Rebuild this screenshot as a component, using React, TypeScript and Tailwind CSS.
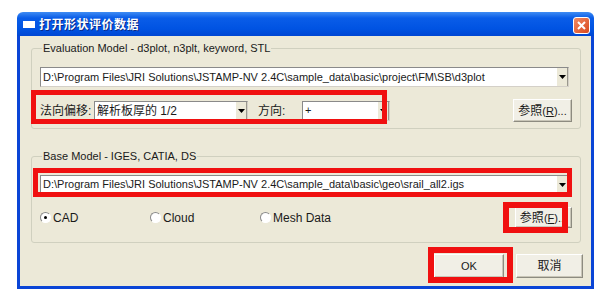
import React from "react";

const latin = { fontFamily: '"Liberation Sans", Arial, sans-serif' };
const cjk = { fontFamily: '"Liberation Sans", "Noto Sans CJK SC", sans-serif' };

function Arrow() {
  return (
    <svg width="7" height="4" viewBox="0 0 7 4">
      <path d="M0 0 H7 L3.5 4 Z" fill="#000" />
    </svg>
  );
}

function Combo({ text, w, h = 20, cjkText = false }: { text: string; w: number; h?: number; cjkText?: boolean }) {
  return (
    <div
      className="flex items-stretch bg-white border border-[#8a8a8a] border-r-[#d4d0c8] border-b-[#d4d0c8] shrink-0"
      style={{ width: w, height: h }}
    >
      <div
        className={`flex-1 flex items-center pl-[2px] overflow-hidden whitespace-nowrap text-[#1a1a1a] ${cjkText ? "text-[12px]" : "text-[11px]"}`}
        style={cjkText ? cjk : latin}
      >
        {text}
      </div>
      <div className="w-[12px] flex items-center justify-center bg-[#ece9d8] border-l border-[#ffffff] border-r border-r-[#9a988d]">
        <Arrow />
      </div>
    </div>
  );
}

function Btn({ w, h, children }: { w: number; h: number; children: React.ReactNode }) {
  return (
    <div
      className="flex items-center justify-center bg-[#f1efe6] border border-t-white border-l-white border-r-[#8d8b80] border-b-[#8d8b80] shadow-[inset_-1px_-1px_0_#c9c6b8] shrink-0 text-[#1a1a1a]"
      style={{ width: w, height: h }}
    >
      {children}
    </div>
  );
}

function Radio({ checked, label }: { checked?: boolean; label: string }) {
  return (
    <div className="flex items-center w-[110px] shrink-0">
      <div className="w-[11px] h-[11px] rounded-full border border-t-[#8a8a8a] border-l-[#8a8a8a] border-r-white border-b-white bg-white flex items-center justify-center">
        {checked && <div className="w-[3px] h-[3px] rounded-full bg-black" />}
      </div>
      <span className="ml-[2px] text-[12px] text-[#1a1a1a]" style={latin}>
        {label}
      </span>
    </div>
  );
}

export default function App() {
  return (
    <div className="w-[601px] h-[299px] bg-white overflow-hidden">
      <div className="ml-[17px] mt-[12px] w-[577px] h-[277px] flex flex-col">
        {/* Title bar */}
        <div className="h-[24px] rounded-t-[6px] bg-[linear-gradient(#3f8cf3,#0a5de8_25%,#0053e2_70%,#0047d3)] flex items-center pl-[6px] pr-[4px] shrink-0">
          <div className="w-[12px] h-[7px] bg-white" />
          <span
            className="ml-[4px] text-[12px] font-bold text-white tracking-[0.5px] [text-shadow:1px_1px_0_#0a2a8a]"
            style={{ fontFamily: '"Noto Sans CJK SC", sans-serif' }}
          >
            打开形状评价数据
          </span>
          <div className="ml-auto w-[17px] h-[17px] rounded-[3px] border border-white bg-[linear-gradient(135deg,#f08a63,#d9491f)] flex items-center justify-center mt-[3px]">
            <svg width="9" height="9" viewBox="0 0 9 9">
              <path d="M1 1 L8 8 M8 1 L1 8" stroke="#fff" strokeWidth="2" />
            </svg>
          </div>
        </div>

        {/* Body */}
        <div className="relative flex-1 bg-[#ece9d8] border-x-[3px] border-b-[3px] border-[#0a45d6] flex flex-col">
          {/* Group 1 */}
          <fieldset className="ml-[11px] mt-[5px] w-[550px] h-[88px] border border-[#d0d0bf] rounded-[3px] px-[8px] shrink-0">
            <legend className="ml-[2px] px-[1px] text-[11px] leading-[14px] text-[#1a1a1a]" style={latin}>
              Evaluation Model - d3plot, n3plt, keyword, STL
            </legend>
            <div className="mt-[12px]">
              <Combo
                w={529}
                text="D:\Program Files\JRI Solutions\JSTAMP-NV 2.4C\sample_data\basic\project\FM\SB\d3plot"
              />
            </div>
            <div className="mt-[12px] flex items-center h-[23px]">
              <span className="w-[54px] text-[12px] text-[#1a1a1a] whitespace-nowrap" style={cjk}>
                法向偏移:
              </span>
              <Combo w={154} h={19} cjkText text="解析板厚的 1/2" />
              <span className="ml-[10px] w-[44px] text-[12px] text-[#1a1a1a] whitespace-nowrap" style={cjk}>
                方向:
              </span>
              <Combo w={88} h={20} text="+" />
              <div className="ml-auto">
                <Btn w={59} h={23}>
                  <span className="text-[12px]" style={cjk}>
                    参照<span className="text-[11px]" style={latin}>(<span className="underline">R</span>)...</span>
                  </span>
                </Btn>
              </div>
            </div>
          </fieldset>

          {/* Group 2 */}
          <fieldset className="ml-[11px] mt-[20px] w-[550px] h-[94px] border border-[#d0d0bf] rounded-[3px] px-[8px] shrink-0">
            <legend className="ml-[2px] px-[1px] text-[11px] leading-[14px] text-[#1a1a1a]" style={latin}>
              Base Model - IGES, CATIA, DS
            </legend>
            <div className="mt-[12px]">
              <Combo
                w={529}
                h={19}
                text="D:\Program Files\JRI Solutions\JSTAMP-NV 2.4C\sample_data\basic\geo\srail_all2.igs"
              />
            </div>
            <div className="mt-[12px] flex items-center h-[23px]">
              <Radio checked label="CAD" />
              <Radio label="Cloud" />
              <Radio label="Mesh Data" />
              <div className="ml-auto">
                <Btn w={57} h={21}>
                  <span className="text-[12px]" style={cjk}>
                    参照<span className="text-[11px]" style={latin}>(<span className="underline">F</span>)...</span>
                  </span>
                </Btn>
              </div>
            </div>
          </fieldset>

          {/* Bottom buttons */}
          <div className="mt-[11px] flex justify-end gap-[12px] mr-[8px]">
            <Btn w={70} h={24}>
              <span className="text-[11px]" style={latin}>OK</span>
            </Btn>
            <Btn w={67} h={24}>
              <span className="text-[12px]" style={cjk}>取消</span>
            </Btn>
          </div>

          {/* Red annotation boxes */}
          <div className="absolute left-[11px] top-[54px] w-[356px] h-[34px] border-[5px] border-[#f01010] pointer-events-none" />
          <div className="absolute left-[13px] top-[132px] w-[539px] h-[29px] border-[5px] border-[#f01010] pointer-events-none" />
          <div className="absolute left-[483px] top-[166px] w-[65px] h-[31px] border-[6px] border-[#f01010] pointer-events-none" />
          <div className="absolute left-[408px] top-[211px] w-[85px] h-[36px] border-[6px] border-[#f01010] pointer-events-none" />
        </div>
      </div>
    </div>
  );
}
